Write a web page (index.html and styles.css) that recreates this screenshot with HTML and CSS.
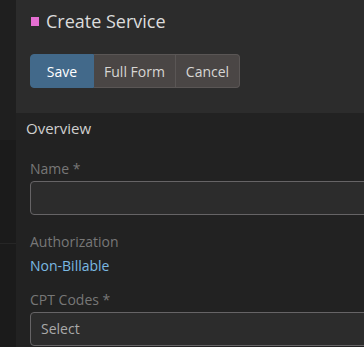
FILE: index.html
```html
<!DOCTYPE html>
<html>
<head>
<meta charset="utf-8">
<link rel="stylesheet" href="styles.css">
</head>
<body>
<div class="app">
  <div class="rail">
    <div class="rail-top"></div>
    <div class="rail-mid"></div>
    <div class="rail-bottom"></div>
  </div>
  <div class="main">
    <div class="header">
      <div class="title-row">
        <span class="swatch"></span>
        <h1 class="title">Create Service</h1>
      </div>
      <div class="btn-group">
        <button class="btn btn-primary">Save</button>
        <button class="btn btn-full">Full Form</button>
        <button class="btn btn-cancel">Cancel</button>
      </div>
    </div>
    <div class="section">
      <div class="section-title">Overview</div>
      <div class="fields">
        <div class="field">
          <label class="label">Name *</label>
          <div class="input"></div>
        </div>
        <div class="field">
          <label class="label">Authorization</label>
          <div class="value-link">Non-Billable</div>
        </div>
        <div class="field field-tight">
          <label class="label">CPT Codes *</label>
          <div class="input select">Select</div>
        </div>
      </div>
    </div>
  </div>
</div>
</body>
</html>
```
FILE: styles.css
```css
html, body {
  margin: 0;
  padding: 0;
  background: #1c1c1c;
  overflow: hidden;
  font-family: "Open Sans", "Noto Sans", sans-serif;
}
.app {
  display: flex;
  width: 364px;
  height: 347px;
  overflow: hidden;
}
.rail {
  width: 16px;
  flex: none;
  display: flex;
  flex-direction: column;
}
.rail-top {
  height: 140px;
  background: #1f1f1f;
}
.rail-mid {
  height: 103px;
  background: #1b1b1b;
  border-bottom: 1px solid #262626;
}
.rail-bottom {
  flex: 1;
  background: #1b1b1b;
}
.main {
  flex: 1;
  min-width: 0;
  display: flex;
  flex-direction: column;
}
.header {
  height: 113px;
  box-sizing: border-box;
  background: #2c2c2c;
  padding: 9px 14px 0;
}
.title-row {
  display: flex;
  align-items: center;
  height: 24px;
}
.swatch {
  width: 8px;
  height: 9px;
  background: #e56fd2;
  margin-left: 1px;
  margin-right: 7px;
}
.title {
  margin: 0;
  font-size: 18px;
  font-weight: 400;
  color: #dcdcdc;
  line-height: 24px;
}
.btn-group {
  display: flex;
  margin-top: 21px;
}
.btn {
  height: 34px;
  box-sizing: border-box;
  font-family: inherit;
  font-size: 14px;
  color: #d8d6d4;
  background: #4a4645;
  border: 1px solid #5a5655;
  border-left-width: 0;
  padding: 0;
  margin: 0;
}
.btn-full {
  width: 82px;
}
.btn-cancel {
  width: 64px;
  border-radius: 0 4px 4px 0;
}
.btn-primary {
  width: 64px;
  background: #42698a;
  border: 1px solid #42698a;
  color: #ffffff;
  border-radius: 4px 0 0 4px;
}
.section {
  flex: 1;
  background: #222222;
  padding-top: 5px;
}
.section-title {
  padding-left: 10px;
  font-size: 15px;
  line-height: 20px;
  color: #cfcfcf;
}
.fields {
  padding-left: 14px;
  padding-top: 21px;
  display: flex;
  flex-direction: column;
  gap: 17px;
}
.field {
  display: flex;
  flex-direction: column;
}
.field-tight {
  margin-top: -3px;
}
.label {
  font-size: 14px;
  line-height: 20px;
  color: #777777;
  margin-bottom: 2px;
}
.input {
  width: 360px;
  height: 34px;
  box-sizing: border-box;
  border: 1px solid #666466;
  border-radius: 4px;
  background: #2c2c2c;
}
.select {
  padding-left: 10px;
  font-size: 14px;
  line-height: 32px;
  color: #a9a9a9;
}
.value-link {
  font-size: 14px;
  line-height: 20px;
  color: #7ab9e2;
  margin-top: 2px;
}
```
